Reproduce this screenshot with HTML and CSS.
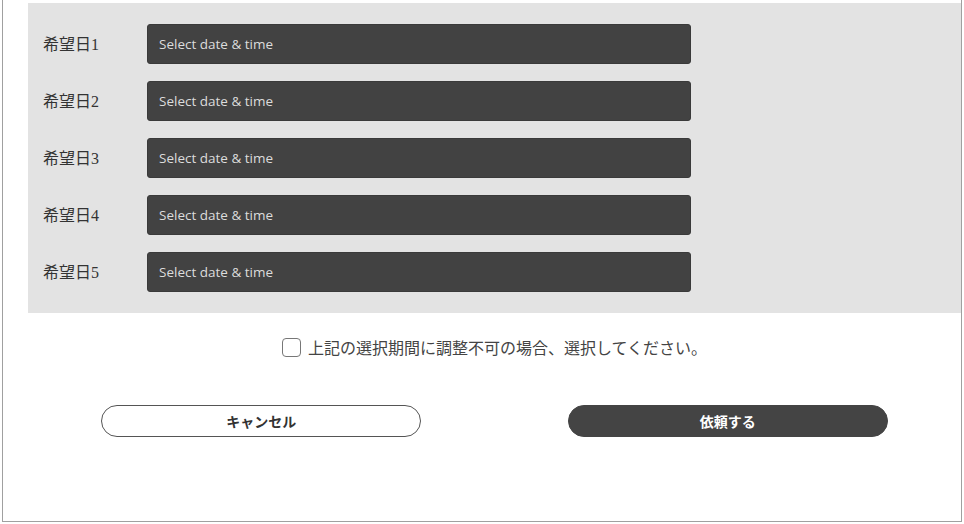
FILE: index.html
```html
<!DOCTYPE html>
<html lang="ja">
<head>
  <meta charset="UTF-8" />
  <meta name="viewport" content="width=device-width, initial-scale=1.0" />
  <title>希望日選択</title>
  <link rel="stylesheet" href="styles.css">
</head>
<body>
  <div class="modal">
    <div class="date-panel">
      <div class="date-row">
        <label class="date-label">希望日1</label>
        <input class="date-input" type="text" placeholder="Select date &amp; time" />
      </div>
      <div class="date-row">
        <label class="date-label">希望日2</label>
        <input class="date-input" type="text" placeholder="Select date &amp; time" />
      </div>
      <div class="date-row">
        <label class="date-label">希望日3</label>
        <input class="date-input" type="text" placeholder="Select date &amp; time" />
      </div>
      <div class="date-row">
        <label class="date-label">希望日4</label>
        <input class="date-input" type="text" placeholder="Select date &amp; time" />
      </div>
      <div class="date-row">
        <label class="date-label">希望日5</label>
        <input class="date-input" type="text" placeholder="Select date &amp; time" />
      </div>
    </div>
    <label class="check-row">
      <input class="check-box" type="checkbox" />
      <span>上記の選択期間に調整不可の場合、選択してください。</span>
    </label>
    <div class="button-row">
      <div class="button-cell">
        <button class="btn btn-cancel">キャンセル</button>
      </div>
      <div class="button-cell">
        <button class="btn btn-submit">依頼する</button>
      </div>
    </div>
  </div>
</body>
</html>
```

FILE: styles.css
```css
body {
  margin: 0;
  font-family: "Noto Sans CJK JP", "Noto Sans", sans-serif;
  background: #fff;
  color: #333;
}
.modal {
  box-sizing: border-box;
  width: 960px;
  height: 522px;
  margin-left: 2px;
  padding: 3px 0 0 25px;
  border: 1px solid #a0a0a0;
  border-top: none;
}
.date-panel {
  background: #e3e3e3;
  padding: 21px 0 21px 15px;
  display: flex;
  flex-direction: column;
  gap: 17px;
}
.date-row {
  display: flex;
  align-items: center;
}
.date-label {
  width: 104px;
  font-family: "Liberation Serif", "Noto Sans CJK JP", serif;
  font-size: 16px;
  color: #333;
  margin-top: -3px;
}
.date-input {
  box-sizing: border-box;
  width: 544px;
  height: 40px;
  padding: 0 11px;
  background: #424242;
  border: 1px solid #3a3a3a;
  border-radius: 3px;
  font-family: "Open Sans", sans-serif;
  font-size: 13.5px;
  color: #fff;
}
.date-input::placeholder {
  color: #dcdcdc;
}
.check-row {
  display: flex;
  justify-content: center;
  align-items: center;
  gap: 7px;
  margin-top: 22px;
  font-size: 16px;
  line-height: 24px;
  color: #444;
}
.check-box {
  appearance: none;
  width: 19px;
  height: 19px;
  margin: 0;
  border: 1.5px solid #777;
  border-radius: 4px;
  background: #fff;
}
.button-row {
  display: grid;
  grid-template-columns: 1fr 1fr;
  margin-top: 46px;
}
.button-cell {
  display: flex;
  justify-content: center;
}
.btn {
  box-sizing: border-box;
  width: 320px;
  height: 32px;
  border-radius: 16px;
  font-family: "Noto Sans CJK JP", sans-serif;
  font-size: 14px;
  font-weight: bold;
  cursor: pointer;
}
.btn-cancel {
  background: #fff;
  color: #333;
  border: 1px solid #555;
}
.btn-submit {
  background: #444;
  color: #fff;
  border: 1px solid #444;
}
```
